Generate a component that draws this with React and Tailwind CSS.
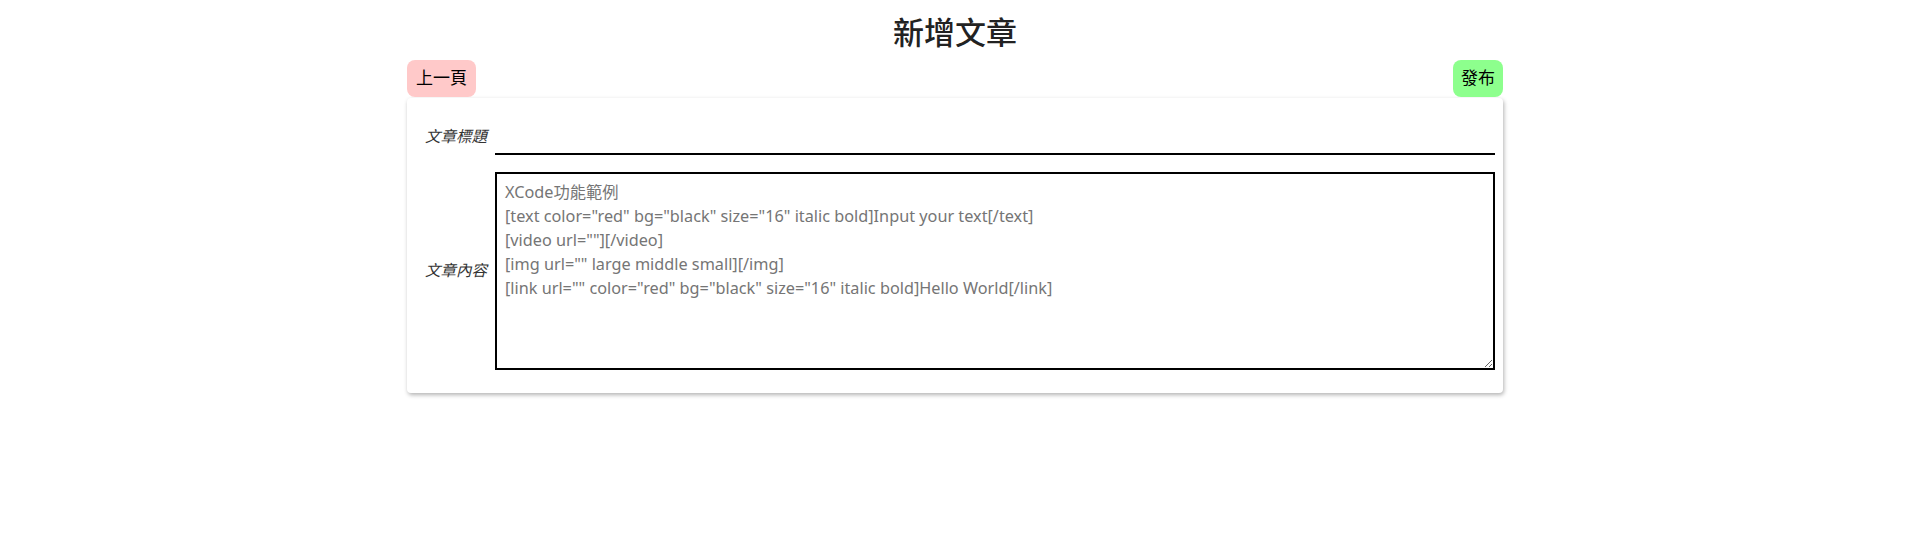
import React, { useState } from 'react';

const FONT = "font-['Liberation_Sans','Noto_Sans_CJK_TC',sans-serif]";

const PLACEHOLDER = [
  'XCode功能範例',
  '[text color="red" bg="black" size="16" italic bold]Input your text[/text]',
  '[video url=""][/video]',
  '[img url="" large middle small][/img]',
  '[link url="" color="red" bg="black" size="16" italic bold]Hello World[/link]',
].join('\n');

const App = () => {
  const [title, setTitle] = useState('');
  const [content, setContent] = useState('');

  return (
    <div className={`w-[1910px] min-h-[552px] bg-white text-[#222] ${FONT}`}>
      <h1 className="pt-[15px] text-center text-[31px] leading-[38px] font-medium">新增文章</h1>

      <div className="w-[1096px] mx-auto mt-[7px]">
        <div className="flex justify-between items-end">
          <button
            type="button"
            className="h-[37px] px-[9px] rounded-[8px] bg-[#ffc9c9] text-[17px] text-black"
          >
            上一頁
          </button>
          <button
            type="button"
            className="h-[37px] px-[8px] rounded-[8px] bg-[#8dff8d] text-[17px] text-black"
          >
            發布
          </button>
        </div>

        {/* 表單卡片 */}
        <div className="mt-[1px] bg-white rounded-[4px] shadow-[1px_2px_4px_rgba(0,0,0,0.3)] pl-[18px] pr-[8px] pt-[20px] pb-[23px]">
          <div className="flex items-center gap-[7px] h-[37px]">
            <label className="w-[63px] shrink-0 text-[15.5px] italic text-[#333]">文章標題</label>
            <input
              value={title}
              onChange={(e) => setTitle(e.target.value)}
              className="flex-1 h-full border-0 border-b-2 border-black outline-none bg-transparent text-[16px]"
            />
          </div>

          <div className="flex items-center gap-[7px] mt-[17px]">
            <label className="w-[63px] shrink-0 text-[15.5px] italic text-[#333]">文章內容</label>
            <textarea
              value={content}
              onChange={(e) => setContent(e.target.value)}
              placeholder={PLACEHOLDER}
              className="flex-1 h-[198px] border-2 border-black px-[8px] py-[6px] font-['Noto_Sans','Noto_Sans_CJK_TC',sans-serif] text-[16.25px] leading-[24px] outline-none placeholder:text-[#757575]"
            />
          </div>
        </div>
      </div>
    </div>
  );
};

export default App;
